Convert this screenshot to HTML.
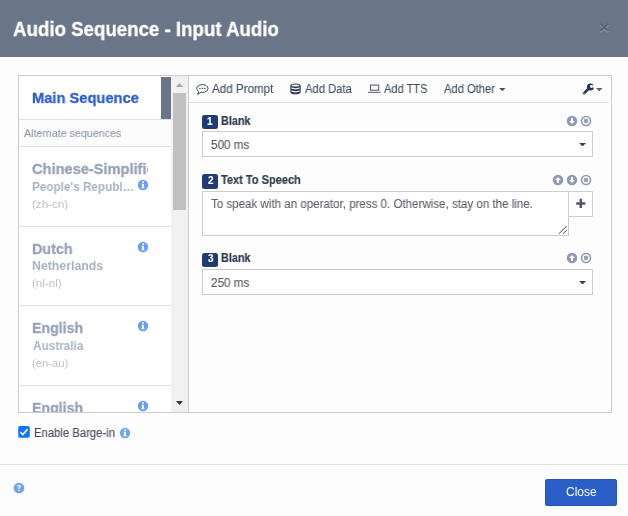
<!DOCTYPE html>
<html><head><meta charset="utf-8"><title>Audio Sequence - Input Audio</title>
<style>
*{box-sizing:border-box;margin:0;padding:0}
html,body{width:628px;height:516px;overflow:hidden;background:#fdfdfd;font-family:"Liberation Sans",sans-serif;font-size:12px}
.a{position:absolute;display:block}
.t{position:absolute;display:block;white-space:nowrap;transform-origin:0 0;will-change:transform}
.hdr{left:0;top:0;width:628px;height:57px;background:#6b7588}
.panel{left:18px;top:75px;width:594px;height:338px;border:1px solid #ccc;background:#fff}
.hl{height:1px;background:#dcdfe4}
.box{border:1px solid #ccc;background:#fff}
.badge{background:#203a72;border-radius:2.5px}
</style></head><body>

<div class="a hdr"></div>
<span class="t" style="left:12.82px;top:19.00px;font-size:20px;line-height:20px;color:#fff;font-weight:bold;-webkit-text-stroke:0.3px;transform:scaleX(0.9337);">Audio Sequence - Input Audio</span>
<span class="t" id="xx" style="left:599.2px;top:20px;font-size:15.8px;line-height:15.8px;font-weight:bold;color:#59616f;text-shadow:0 1px 0 #a0a7b3;transform:scaleX(1.14)">×</span>
<div class="a panel"></div>
<div class="a" style="left:161px;top:77px;width:10px;height:42px;background:#6b7588"></div>
<div class="a hl" style="left:19px;top:119px;width:152px"></div>
<div class="a" style="left:19px;top:120px;width:152px;height:26px;background:#fcfcfc"></div>
<div class="a hl" style="left:19px;top:146px;width:152px"></div>
<div class="a hl" style="left:19px;top:226px;width:152px"></div>
<div class="a hl" style="left:19px;top:305px;width:152px"></div>
<div class="a hl" style="left:19px;top:385px;width:152px"></div>
<span class="t" style="left:31.77px;top:90.00px;font-size:15px;line-height:15px;color:#2a5fc7;font-weight:bold;-webkit-text-stroke:0.3px;transform:scaleX(0.9792);">Main Sequence</span>
<span class="t" style="left:24.00px;top:128.20px;font-size:11px;line-height:11px;color:#8e98ac;-webkit-text-stroke:0.1px;transform:scaleX(0.9700);">Alternate sequences</span>
<div class="a" style="left:19px;top:147px;width:129px;height:79px;overflow:hidden">
<span class="t" style="left:calc(-19px + 31.77px);top:calc(-147px + 161.00px);font-size:15px;line-height:15px;color:#97a1b8;font-weight:bold;-webkit-text-stroke:0.3px;transform:scaleX(0.9750);">Chinese-Simplified</span>
</div>
<span class="t" style="left:32.02px;top:181.00px;font-size:12px;line-height:12px;color:#aab2c5;font-weight:bold;transform:scaleX(0.9757);">People&#39;s Republ…</span>
<span class="t" style="left:31.95px;top:199.00px;font-size:11px;line-height:11px;color:#bac1d0;transform:scaleX(1.0530);">(zh-cn)</span>
<span class="t" style="left:32.04px;top:240.60px;font-size:15px;line-height:15px;color:#97a1b8;font-weight:bold;-webkit-text-stroke:0.3px;transform:scaleX(0.9573);">Dutch</span>
<span class="t" style="left:31.97px;top:260.00px;font-size:12px;line-height:12px;color:#aab2c5;font-weight:bold;transform:scaleX(1.0257);">Netherlands</span>
<span class="t" style="left:31.94px;top:278.20px;font-size:11px;line-height:11px;color:#bac1d0;transform:scaleX(1.0556);">(nl-nl)</span>
<span class="t" style="left:32.06px;top:320.00px;font-size:15px;line-height:15px;color:#97a1b8;font-weight:bold;-webkit-text-stroke:0.3px;transform:scaleX(0.9423);">English</span>
<span class="t" style="left:33.00px;top:340.00px;font-size:12px;line-height:12px;color:#aab2c5;font-weight:bold;transform:scaleX(0.9808);">Australia</span>
<span class="t" style="left:31.98px;top:358.00px;font-size:11px;line-height:11px;color:#bac1d0;transform:scaleX(1.0221);">(en-au)</span>
<div class="a" style="left:19px;top:386px;width:152px;height:26px;overflow:hidden">
<span class="t" style="left:calc(-19px + 32.06px);top:calc(-386px + 400.00px);font-size:15px;line-height:15px;color:#97a1b8;font-weight:bold;-webkit-text-stroke:0.3px;transform:scaleX(0.9423);">English</span>
</div>
<svg class="a" style="left:137.20px;top:178.55px" width="12" height="12" viewBox="0 0 12 12"><circle cx="6" cy="6" r="5.2" fill="#689ef3"/><rect x="5.2" y="2.3" width="1.7" height="1.6" fill="#fff"/><path d="M4.7 4.8h2.2v3.5h0.7v1h-3.2v-1h0.7v-2.5h-0.4z" fill="#fff"/></svg>
<svg class="a" style="left:137.20px;top:240.95px" width="12" height="12" viewBox="0 0 12 12"><circle cx="6" cy="6" r="5.2" fill="#689ef3"/><rect x="5.2" y="2.3" width="1.7" height="1.6" fill="#fff"/><path d="M4.7 4.8h2.2v3.5h0.7v1h-3.2v-1h0.7v-2.5h-0.4z" fill="#fff"/></svg>
<svg class="a" style="left:137.20px;top:320.25px" width="12" height="12" viewBox="0 0 12 12"><circle cx="6" cy="6" r="5.2" fill="#689ef3"/><rect x="5.2" y="2.3" width="1.7" height="1.6" fill="#fff"/><path d="M4.7 4.8h2.2v3.5h0.7v1h-3.2v-1h0.7v-2.5h-0.4z" fill="#fff"/></svg>
<div class="a" style="left:137px;top:399px;width:13px;height:13px;overflow:hidden"><svg class="a" style="left:0.20px;top:0.75px" width="12" height="12" viewBox="0 0 12 12"><circle cx="6" cy="6" r="5.2" fill="#689ef3"/><rect x="5.2" y="2.3" width="1.7" height="1.6" fill="#fff"/><path d="M4.7 4.8h2.2v3.5h0.7v1h-3.2v-1h0.7v-2.5h-0.4z" fill="#fff"/></svg></div>
<div class="a" style="left:171px;top:76px;width:17px;height:336px;background:#f1f1f1"></div>
<div class="a" style="left:173px;top:93px;width:13px;height:117px;background:#c1c1c1"></div>
<svg class="a" style="left:176px;top:83px" width="7" height="4" viewBox="0 0 7 4"><path d="M0 4H7L3.5 0z" fill="#a0a4ad"/></svg>
<svg class="a" style="left:176px;top:401px" width="7" height="4" viewBox="0 0 7 4"><path d="M0 0H7L3.5 4z" fill="#2e3850"/></svg>
<div class="a" style="left:188px;top:76px;width:1px;height:336px;background:#ccc"></div>
<div class="a" style="left:189px;top:76px;width:422px;height:336px;background:#fdfdfd"></div>
<div class="a hl" style="left:189px;top:102px;width:420px;background:#dcdfe4"></div>
<svg class="a" style="left:195px;top:83px" width="15" height="13" viewBox="0 0 15 13"><path d="M7.4 1.6c3.1 0 5.6 1.7 5.6 3.9s-2.5 3.9-5.6 3.9c-0.6 0-1.1-0.05-1.6-0.15-0.9 1-1.9 1.6-3.3 2 0.7-0.8 1.1-1.6 1.3-2.6-1.2-0.7-2-1.8-2-3.15 0-2.2 2.5-3.9 5.6-3.9z" fill="none" stroke="#3b4458" stroke-width="1"/><rect x="4.3" y="4.9" width="1.3" height="1.2" fill="#3b4458"/><rect x="6.8" y="4.9" width="1.3" height="1.2" fill="#3b4458"/><rect x="9.3" y="4.9" width="1.3" height="1.2" fill="#3b4458"/></svg>
<span class="t" style="left:212.00px;top:83.00px;font-size:12px;line-height:12px;color:#444b5c;-webkit-text-stroke:0.1px;transform:scaleX(0.9683);">Add Prompt</span>
<svg class="a" style="left:290px;top:83px" width="11" height="12" viewBox="0 0 11 12"><path d="M0.3 2.6c0-1.2 2.3-2.1 5.2-2.1s5.2 0.9 5.2 2.1v6.6c0 1.2-2.3 2.1-5.2 2.1s-5.2-0.9-5.2-2.1z" fill="#2f384d"/><ellipse cx="5.5" cy="2.5" rx="3.8" ry="1" fill="#fff"/><path d="M1.4 4.8c0.9 0.7 2.4 1 4.1 1s3.2-0.3 4.1-1M1.4 7.8c0.9 0.7 2.4 1 4.1 1s3.2-0.3 4.1-1" stroke="#fff" stroke-width="1.15" fill="none"/></svg>
<span class="t" style="left:305.20px;top:83.00px;font-size:12px;line-height:12px;color:#444b5c;-webkit-text-stroke:0.1px;transform:scaleX(0.9360);">Add Data</span>
<svg class="a" style="left:367px;top:84px" width="14" height="10" viewBox="0 0 14 10"><rect x="3.5" y="1.1" width="8.2" height="5.1" fill="none" stroke="#4f566a" stroke-width="1"/><rect x="1" y="7.8" width="12.6" height="1" fill="#4f566a"/></svg>
<span class="t" style="left:384.20px;top:83.00px;font-size:12px;line-height:12px;color:#444b5c;-webkit-text-stroke:0.1px;transform:scaleX(0.9213);">Add TTS</span>
<span class="t" style="left:444.40px;top:83.00px;font-size:12px;line-height:12px;color:#444b5c;-webkit-text-stroke:0.1px;transform:scaleX(0.9309);">Add Other</span>
<svg class="a" style="left:499.3px;top:88.2px" width="6.6" height="3.2" viewBox="0 0 6.6 3.2"><path d="M0 0H6.6L3.3 3.2z" fill="#4a5163"/></svg>
<svg class="a" style="left:581px;top:82px" width="14" height="14" viewBox="0 0 14 14"><path d="M2.9 11.4L8.4 5.9" stroke="#2b344d" stroke-width="2.7" stroke-linecap="round"/><circle cx="9.4" cy="4.9" r="3.5" fill="#2b344d"/><path d="M10.4 4.5L14 2.3V6.5z" fill="#fff"/><circle cx="10.5" cy="4.5" r="1.45" fill="#fff"/><circle cx="2.9" cy="11.4" r="0.55" fill="#fff"/></svg>
<svg class="a" style="left:596.2px;top:87.8px" width="6.6" height="3.3" viewBox="0 0 6.6 3.3"><path d="M0 0H6.6L3.3 3.3z" fill="#5a6070"/></svg>
<div class="a badge" style="left:202px;top:114.8px;width:16px;height:14.2px"></div>
<span class="t" style="left:0.00px;top:117.00px;font-size:10px;line-height:10px;color:#fff;font-weight:bold;-webkit-text-stroke:0.1px;left:206.7px;">1</span>
<span class="t" style="left:220.60px;top:115.00px;font-size:12px;line-height:12px;color:#333a4f;font-weight:bold;-webkit-text-stroke:0.2px;transform:scaleX(0.9031);">Blank</span>
<svg class="a" style="left:566.00px;top:114.80px" width="12" height="12" viewBox="0 0 12 12"><circle cx="6" cy="6" r="5.25" fill="#8e9ab3"/><path d="M6 9.1L8.9 6H7V3H5V6H3.1z" fill="#fff"/></svg>
<svg class="a" style="left:580.10px;top:114.80px" width="12" height="12" viewBox="0 0 12 12"><circle cx="6" cy="6" r="4.5" fill="none" stroke="#8e9ab3" stroke-width="1.6"/><path d="M4.3 4.3L7.7 7.7M7.7 4.3L4.3 7.7" stroke="#8e9ab3" stroke-width="2"/></svg>
<div class="a box" style="left:202px;top:131px;width:391px;height:26px"></div>
<span class="t" style="left:211.02px;top:139.00px;font-size:12px;line-height:12px;color:#555;-webkit-text-stroke:0.1px;transform:scaleX(0.9763);">500 ms</span>
<svg class="a" style="left:578.5px;top:142.8px" width="7" height="3.5" viewBox="0 0 7 3.5"><path d="M0 0H7L3.5 3.5z" fill="#3b4254"/></svg>
<div class="a badge" style="left:202px;top:174.2px;width:16px;height:14.5px"></div>
<span class="t" style="left:0.00px;top:176.00px;font-size:10px;line-height:10px;color:#fff;font-weight:bold;-webkit-text-stroke:0.1px;left:207.5px;">2</span>
<span class="t" style="left:221.20px;top:174.00px;font-size:12px;line-height:12px;color:#333a4f;font-weight:bold;-webkit-text-stroke:0.2px;transform:scaleX(0.9186);">Text To Speech</span>
<svg class="a" style="left:552.00px;top:173.80px" width="12" height="12" viewBox="0 0 12 12"><circle cx="6" cy="6" r="5.25" fill="#8e9ab3"/><path d="M6 2.9L8.9 6H7v3H5V6H3.1z" fill="#fff"/></svg>
<svg class="a" style="left:566.00px;top:173.80px" width="12" height="12" viewBox="0 0 12 12"><circle cx="6" cy="6" r="5.25" fill="#8e9ab3"/><path d="M6 9.1L8.9 6H7V3H5V6H3.1z" fill="#fff"/></svg>
<svg class="a" style="left:580.10px;top:173.80px" width="12" height="12" viewBox="0 0 12 12"><circle cx="6" cy="6" r="4.5" fill="none" stroke="#8e9ab3" stroke-width="1.6"/><path d="M4.3 4.3L7.7 7.7M7.7 4.3L4.3 7.7" stroke="#8e9ab3" stroke-width="2"/></svg>
<div class="a box" style="left:202px;top:191px;width:367px;height:45px"></div>
<div class="a box" style="left:568px;top:191px;width:25px;height:26px;border-color:#c7cfe2"></div>
<div class="a" style="left:568px;top:217px;width:1px;height:19px;background:#ccc"></div>
<svg class="a" style="left:575px;top:198px" width="12" height="12" viewBox="0 0 12 12"><path d="M5.8 0.8V10M1.2 5.4H10.4" stroke="#4f576b" stroke-width="2.5"/></svg>
<svg class="a" style="left:558px;top:225px" width="10" height="10" viewBox="0 0 10 10"><path d="M0.8 8.9L8.7 1M4.9 8.9L8.7 5.1" stroke="#444" stroke-width="1"/></svg>
<span class="t" style="left:211.00px;top:198.00px;font-size:12px;line-height:12px;color:#5e6169;-webkit-text-stroke:0.1px;transform:scaleX(0.9632);">To speak with an operator, press 0. Otherwise, stay on the line.</span>
<div class="a badge" style="left:202px;top:252.8px;width:16px;height:14.2px"></div>
<span class="t" style="left:0.00px;top:254.00px;font-size:10px;line-height:10px;color:#fff;font-weight:bold;-webkit-text-stroke:0.1px;left:207.5px;">3</span>
<span class="t" style="left:220.60px;top:252.00px;font-size:12px;line-height:12px;color:#333a4f;font-weight:bold;-webkit-text-stroke:0.2px;transform:scaleX(0.9031);">Blank</span>
<svg class="a" style="left:566.00px;top:251.60px" width="12" height="12" viewBox="0 0 12 12"><circle cx="6" cy="6" r="5.25" fill="#8e9ab3"/><path d="M6 2.9L8.9 6H7v3H5V6H3.1z" fill="#fff"/></svg>
<svg class="a" style="left:580.10px;top:251.60px" width="12" height="12" viewBox="0 0 12 12"><circle cx="6" cy="6" r="4.5" fill="none" stroke="#8e9ab3" stroke-width="1.6"/><path d="M4.3 4.3L7.7 7.7M7.7 4.3L4.3 7.7" stroke="#8e9ab3" stroke-width="2"/></svg>
<div class="a box" style="left:202px;top:269px;width:391px;height:26px"></div>
<span class="t" style="left:211.02px;top:277.00px;font-size:12px;line-height:12px;color:#555;-webkit-text-stroke:0.1px;transform:scaleX(0.9763);">250 ms</span>
<svg class="a" style="left:578.5px;top:281px" width="7" height="3.5" viewBox="0 0 7 3.5"><path d="M0 0H7L3.5 3.5z" fill="#3b4254"/></svg>
<svg class="a" style="left:18px;top:426px" width="12" height="12" viewBox="0 0 12 12"><rect x="0.2" y="0.1" width="11.6" height="11.7" rx="1.8" fill="#1175fb"/><path d="M2.5 6.3L4.8 8.6 9.5 3.2" stroke="#fff" stroke-width="1.6" fill="none"/></svg>
<span class="t" style="left:33.56px;top:427.00px;font-size:12px;line-height:12px;color:#444b5c;-webkit-text-stroke:0.1px;transform:scaleX(0.9412);">Enable Barge-in</span>
<svg class="a" style="left:118.85px;top:426.50px" width="12" height="12" viewBox="0 0 12 12"><circle cx="6" cy="6" r="5.2" fill="#71a6f8"/><rect x="5.2" y="2.3" width="1.7" height="1.6" fill="#fff"/><path d="M4.7 4.8h2.2v3.5h0.7v1h-3.2v-1h0.7v-2.5h-0.4z" fill="#fff"/></svg>
<div class="a" style="left:0;top:464px;width:628px;height:1px;background:#e0e0e0"></div>
<svg class="a" style="left:12.90px;top:481.50px" width="12" height="12" viewBox="0 0 12 12"><circle cx="6" cy="6" r="5.3" fill="#6ca2f7"/><path d="M4.1 4.6c0-1.1 0.8-1.8 1.9-1.8s1.9 0.7 1.9 1.7c0 1.3-1.3 1.4-1.3 2.4h-1.3c0-1.4 1.2-1.6 1.2-2.3 0-0.3-0.2-0.5-0.5-0.5s-0.6 0.2-0.6 0.6z" fill="#fff"/><rect x="5.3" y="7.6" width="1.4" height="1.4" fill="#fff"/></svg>
<div class="a" style="left:545px;top:479px;width:72px;height:27px;background:#2a5fc7;border:1px solid #2554b5;border-radius:2px"></div>
<span class="t" style="left:565.71px;top:486.20px;font-size:12px;line-height:12px;color:#fff;transform:scaleX(0.9897);">Close</span>
</body></html>
